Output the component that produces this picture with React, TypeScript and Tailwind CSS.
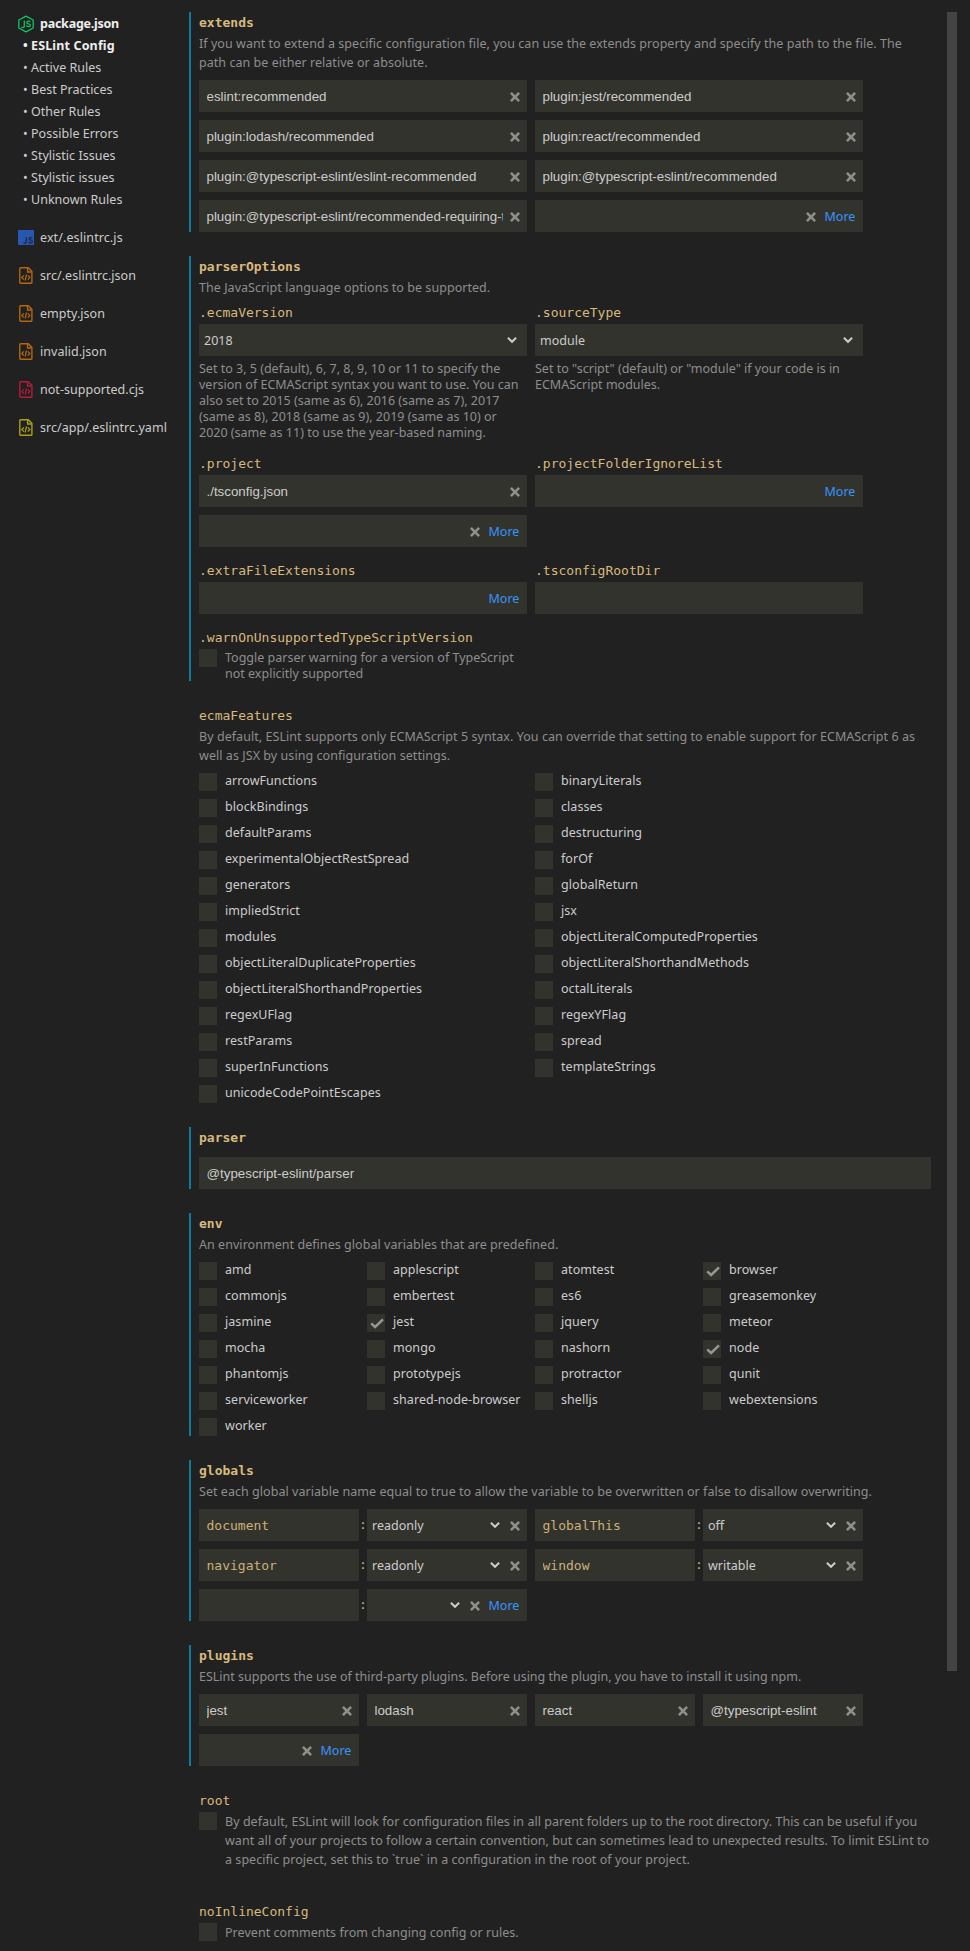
import React from 'react';

const nav = [
  'ESLint Config',
  'Active Rules',
  'Best Practices',
  'Other Rules',
  'Possible Errors',
  'Stylistic Issues',
  'Stylistic issues',
  'Unknown Rules',
];

const files = [
  { name: 'ext/.eslintrc.js', icon: 'js', color: '' },
  { name: 'src/.eslintrc.json', icon: 'code', color: 'text-[#b3670f]' },
  { name: 'empty.json', icon: 'code', color: 'text-[#b3670f]' },
  { name: 'invalid.json', icon: 'code', color: 'text-[#b3670f]' },
  { name: 'not-supported.cjs', icon: 'code', color: 'text-[#b31b38]' },
  { name: 'src/app/.eslintrc.yaml', icon: 'code', color: 'text-[#aaa212]' },
];

const ecmaFeatures = [
  'arrowFunctions', 'binaryLiterals',
  'blockBindings', 'classes',
  'defaultParams', 'destructuring',
  'experimentalObjectRestSpread', 'forOf',
  'generators', 'globalReturn',
  'impliedStrict', 'jsx',
  'modules', 'objectLiteralComputedProperties',
  'objectLiteralDuplicateProperties', 'objectLiteralShorthandMethods',
  'objectLiteralShorthandProperties', 'octalLiterals',
  'regexUFlag', 'regexYFlag',
  'restParams', 'spread',
  'superInFunctions', 'templateStrings',
  'unicodeCodePointEscapes',
];

const environments = [
  'amd', 'applescript', 'atomtest', 'browser',
  'commonjs', 'embertest', 'es6', 'greasemonkey',
  'jasmine', 'jest', 'jquery', 'meteor',
  'mocha', 'mongo', 'nashorn', 'node',
  'phantomjs', 'prototypejs', 'protractor', 'qunit',
  'serviceworker', 'shared-node-browser', 'shelljs', 'webextensions',
  'worker',
];
const enabledEnvironments = ['browser', 'jest', 'node'];

function NodeIcon() {
  return (
    <svg className="mt-[2.5px]" width="16" height="18" viewBox="0 0 16 18" fill="none" stroke="#0fc466">
      <path d="M8 1.1 15.2 5v8L8 16.9.8 13V5Z" strokeWidth="1.3" strokeLinejoin="round" />
      <path d="M6.3 5.6v5.6q0 1.4-1.3 1.4-.9 0-1.4-.7" strokeWidth="1.3" />
      <path d="M12.2 7.1q-.4-.9-1.8-.9-1.7 0-1.7 1.3 0 1.1 1.8 1.3 1.9.2 1.9 1.4 0 1.4-1.9 1.4-1.7 0-2.1-1.1" strokeWidth="1.3" />
    </svg>
  );
}

function JsIcon() {
  return (
    <svg className="mt-1" width="16" height="15" viewBox="0 0 16 15" fill="none">
      <path d="M0 0h16v15H0z" fill="#2757ae" />
      <path d="M8.3 7v4.8q0 1.4-1.3 1.4-.9 0-1.5-.7" stroke="#1f2f4c" strokeWidth="1.4" />
      <path d="M14.2 8.4q-.5-.9-1.8-.9-1.5 0-1.5 1.2 0 1 1.7 1.3 1.8.3 1.8 1.5 0 1.5-1.9 1.5-1.5 0-2-1.1" stroke="#1f2f4c" strokeWidth="1.4" />
    </svg>
  );
}

function CodeFileIcon() {
  return (
    <svg className="mt-[3px]" width="16" height="17" viewBox="0 0 16 17" fill="none" stroke="currentColor">
      <path d="M2.7.8h7.6l3.6 3.6v11a.9.9 0 0 1-.9.9H2.7a.9.9 0 0 1-.9-.9V1.7a.9.9 0 0 1 .9-.9Z" strokeWidth="1.4" />
      <path d="M9.6 1v4h4" strokeWidth="1.4" />
      <path d="M5.9 8.3 3.8 10.5l2.1 2.2M9.8 8.3l2.1 2.2-2.1 2.2M8.5 7.5l-1.3 6" strokeWidth="1.2" />
    </svg>
  );
}

function Chevron({ className = '' }: { className?: string }) {
  return (
    <svg className={className} width="10" height="8" viewBox="0 0 10 8" fill="none" stroke="#ccc" strokeWidth="2">
      <path d="M.9 1.8 5 5.8 9.1 1.8" />
    </svg>
  );
}

function Remove() {
  return (
    <button className="flex h-8 w-6 shrink-0 items-center justify-center pr-px pt-px">
      <svg width="10" height="10" viewBox="0 0 10 10" stroke="#8f8f8d" strokeWidth="2.6">
        <path d="M.9.9l8.2 8.2M9.1.9.9 9.1" />
      </svg>
    </button>
  );
}

function More() {
  return <a className="h-8 w-10 shrink-0 self-start pl-[1.5px] leading-[34px] text-[#3794ff]">More</a>;
}

type FieldProps = { value?: string; remove?: boolean; more?: boolean; mono?: boolean; className?: string };

function Field({ value = '', remove, more, mono, className = '' }: FieldProps) {
  return (
    <div className={`flex h-8 items-center bg-[#33332d] ${className}`}>
      <div
        className={`ml-[7.5px] h-8 flex-1 self-start overflow-hidden whitespace-nowrap leading-[34px] ${
          mono
            ? 'font-["DejaVu_Sans_Mono",monospace] text-[13px] text-[#cbb079]'
            : 'font-["Liberation_Sans",sans-serif] text-[13.333px] text-[#ccc]'
        }`}
      >
        {value}
      </div>
      {remove && <Remove />}
      {more && <More />}
    </div>
  );
}

function Select({ value, remove, more, className = '' }: FieldProps) {
  return (
    <div className={`flex h-8 items-center bg-[#33332d] ${className}`}>
      <span className="flex-1 self-start pl-[5px] leading-[34px] text-[#ccc]">{value}</span>
      <Chevron className={remove ? 'mr-[3px]' : 'mr-[10px]'} />
      {remove && <Remove />}
      {more && <More />}
    </div>
  );
}

function Box({ on }: { on?: boolean }) {
  return (
    <span className="flex h-[18px] w-[18px] shrink-0 items-center justify-center bg-[#33332d] pl-px pt-px">
      {on && (
        <svg width="14" height="11" viewBox="0 0 14 11" fill="none" stroke="#959593" strokeWidth="2.6">
          <path d="m1.2 5.4 3.9 3.5 7.9-7.5" />
        </svg>
      )}
    </span>
  );
}

function Check({ on, label }: { on?: boolean; label: string }) {
  return (
    <label className="flex h-[18px] gap-2">
      <Box on={on} />
      <span className="whitespace-nowrap leading-4 tracking-[0.06px] text-[#ccc]">{label}</span>
    </label>
  );
}

function Key({ children, bold }: { children: React.ReactNode; bold?: boolean }) {
  return (
    <h3 className={`h-[22px] whitespace-nowrap font-["DejaVu_Sans_Mono",monospace] text-[13px] leading-[22px] text-[#d7ba7d] ${bold ? 'font-bold' : ''}`}>
      {children}
    </h3>
  );
}

function Lines({ lines, tight, tracking = 'tracking-[0.045px]' }: { lines: string[]; tight?: boolean; tracking?: string }) {
  return (
    <div className={`whitespace-nowrap text-[#8e8e8e] ${tight ? '-mb-px pt-px leading-4' : `leading-[19px] ${tracking}`}`}>
      {lines.map((l) => (
        <p key={l}>{l}</p>
      ))}
    </div>
  );
}

function Section({ name, set, children }: { name: string; set?: boolean; children: React.ReactNode }) {
  return (
    <section className={`border-l-2 pl-2 ${set ? 'border-[#0c7d9d]' : 'border-transparent'}`}>
      <Key bold={set}>{name}</Key>
      {children}
    </section>
  );
}

function GlobalVar({ name, value, more }: { name?: string; value?: string; more?: boolean }) {
  return (
    <div className="flex">
      <Field className="w-40" value={name} mono />
      <span className='w-2 text-center font-["DejaVu_Sans_Mono",monospace] text-[13px] leading-[31px] text-[#cbb079]'>:</span>
      <Select className="w-40" value={value} remove more={more} />
    </div>
  );
}

const two = 'grid grid-cols-[328px_328px] gap-2';

export default function App() {
  return (
    <div className='flex h-[1951px] w-[970px] overflow-hidden bg-[#212121] pt-3 font-["Noto_Sans",sans-serif] text-[12.5px] text-[#ccc]'>
      <aside className="w-[189px] shrink-0 whitespace-nowrap pl-[18px] leading-[24px]">
        <div className="flex h-[22px] items-start">
          <NodeIcon />
          <span className="ml-1.5 font-bold tracking-[-0.24px] text-[#eee]">package.json</span>
        </div>
        <ul>
          {nav.map((n, i) => (
            <li key={n} className={`flex h-[22px] pl-[5px] tracking-[0.02px] ${i === 0 ? 'font-bold text-[#eee]' : ''}`}>
              <span className="w-2">•</span>
              <span className={i === 0 ? 'tracking-[0.15px]' : ''}>{n}</span>
            </li>
          ))}
        </ul>
        {files.map((f) => (
          <div key={f.name} className="mt-4 flex h-[22px] items-start">
            <span className={f.color}>{f.icon === 'js' ? <JsIcon /> : <CodeFileIcon />}</span>
            <span className={`ml-1.5 ${f.icon === 'js' ? 'tracking-[0.1px]' : 'tracking-[0.03px]'}`}>{f.name}</span>
          </div>
        ))}
      </aside>

      <main className="flex w-[742px] shrink-0 flex-col gap-6">
        <Section name="extends" set>
          <Lines
            lines={[
              'If you want to extend a specific configuration file, you can use the extends property and specify the path to the file. The',
              'path can be either relative or absolute.',
            ]}
          />
          <div className={`mt-2 ${two}`}>
            <Field value="eslint:recommended" remove />
            <Field value="plugin:jest/recommended" remove />
            <Field value="plugin:lodash/recommended" remove />
            <Field value="plugin:react/recommended" remove />
            <Field value="plugin:@typescript-eslint/eslint-recommended" remove />
            <Field value="plugin:@typescript-eslint/recommended" remove />
            <Field value="plugin:@typescript-eslint/recommended-requiring-type-checking" remove />
            <Field remove more />
          </div>
        </Section>

        <Section name="parserOptions" set>
          <Lines lines={['The JavaScript language options to be supported.']} />
          <div className="mt-[5px] grid grid-cols-[328px_328px] gap-x-2 gap-y-[13px]">
            <div className="flex flex-col">
              <Key>.ecmaVersion</Key>
              <Select value="2018" className="mb-1" />
              <Lines
                tight
                lines={[
                  'Set to 3, 5 (default), 6, 7, 8, 9, 10 or 11 to specify the',
                  'version of ECMAScript syntax you want to use. You can',
                  'also set to 2015 (same as 6), 2016 (same as 7), 2017',
                  '(same as 8), 2018 (same as 9), 2019 (same as 10) or',
                  '2020 (same as 11) to use the year-based naming.',
                ]}
              />
            </div>
            <div>
              <Key>.sourceType</Key>
              <Select value="module" className="mb-1" />
              <Lines tight lines={['Set to "script" (default) or "module" if your code is in', 'ECMAScript modules.']} />
            </div>
            <div>
              <Key>.project</Key>
              <Field value="./tsconfig.json" remove className="mb-2" />
              <Field remove more />
            </div>
            <div>
              <Key>.projectFolderIgnoreList</Key>
              <Field more />
            </div>
            <div>
              <Key>.extraFileExtensions</Key>
              <Field more />
            </div>
            <div>
              <Key>.tsconfigRootDir</Key>
              <Field />
            </div>
            <div>
              <Key>.warnOnUnsupportedTypeScriptVersion</Key>
              <div className="flex gap-2">
                <Box />
                <Lines tight lines={['Toggle parser warning for a version of TypeScript', 'not explicitly supported']} />
              </div>
            </div>
          </div>
        </Section>

        <Section name="ecmaFeatures">
          <Lines
            tracking="tracking-[0.055px]"
            lines={[
              'By default, ESLint supports only ECMAScript 5 syntax. You can override that setting to enable support for ECMAScript 6 as',
              'well as JSX by using configuration settings.',
            ]}
          />
          <div className={`mt-2 ${two}`}>
            {ecmaFeatures.map((f) => (
              <Check key={f} label={f} />
            ))}
          </div>
        </Section>

        <Section name="parser" set>
          <Field value="@typescript-eslint/parser" className="mt-2" />
        </Section>

        <Section name="env" set>
          <Lines lines={['An environment defines global variables that are predefined.']} />
          <div className="mt-2 grid grid-cols-[160px_160px_160px_160px] gap-2">
            {environments.map((e) => (
              <Check key={e} label={e} on={enabledEnvironments.includes(e)} />
            ))}
          </div>
        </Section>

        <Section name="globals" set>
          <Lines lines={['Set each global variable name equal to true to allow the variable to be overwritten or false to disallow overwriting.']} />
          <div className={`mt-2 ${two}`}>
            <GlobalVar name="document" value="readonly" />
            <GlobalVar name="globalThis" value="off" />
            <GlobalVar name="navigator" value="readonly" />
            <GlobalVar name="window" value="writable" />
            <GlobalVar more />
          </div>
        </Section>

        <Section name="plugins" set>
          <Lines
            tracking="tracking-[-0.01px]"
            lines={['ESLint supports the use of third-party plugins. Before using the plugin, you have to install it using npm.']}
          />
          <div className="mt-2 grid grid-cols-[160px_160px_160px_160px] gap-2">
            <Field value="jest" remove />
            <Field value="lodash" remove />
            <Field value="react" remove />
            <Field value="@typescript-eslint" remove />
            <Field remove more />
          </div>
        </Section>

        <Section name="root">
          <div className="mb-2 flex gap-2">
            <Box />
            <Lines
              lines={[
                'By default, ESLint will look for configuration files in all parent folders up to the root directory. This can be useful if you',
                'want all of your projects to follow a certain convention, but can sometimes lead to unexpected results. To limit ESLint to',
                'a specific project, set this to `true` in a configuration in the root of your project.',
              ]}
            />
          </div>
        </Section>

        <Section name="noInlineConfig">
          <div className="flex gap-2">
            <Box />
            <Lines lines={['Prevent comments from changing config or rules.']} />
          </div>
        </Section>
      </main>

      <div className="ml-4 h-[1659px] w-[10px] bg-[#444]" />
    </div>
  );
}
